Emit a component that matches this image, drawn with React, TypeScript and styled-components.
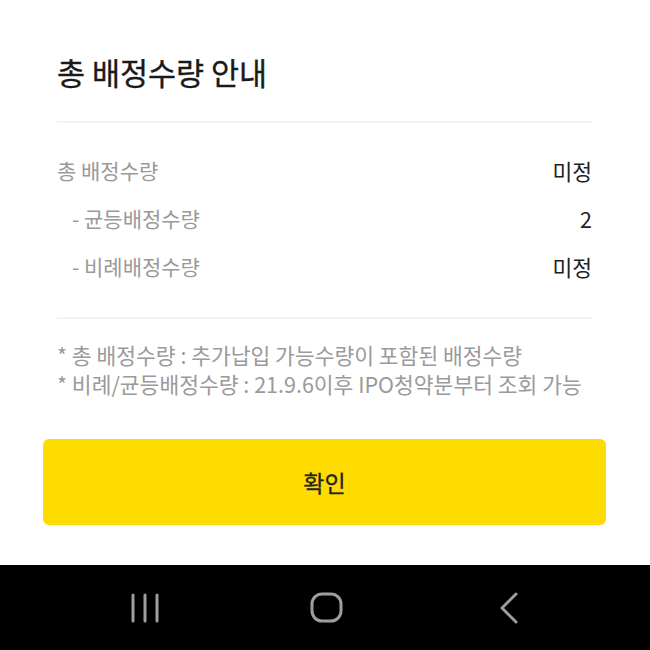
import React from "react";
import styled, { createGlobalStyle } from "styled-components";

const Global = createGlobalStyle`
  html, body { margin: 0; padding: 0; background: #fff; }
  body { font-family: "Noto Sans CJK KR", "Noto Sans", sans-serif; }
  #root { height: 650px; }
`;

const Screen = styled.div`
  width: 650px;
  height: 650px;
  display: flex;
  flex-direction: column;
  background: #fff;
  overflow: hidden;
`;

const Sheet = styled.div`
  flex: 1;
  display: flex;
  flex-direction: column;
  padding: 0 44px 0 43px;
`;

const Inner = styled.div`
  padding: 0 14px;
  display: flex;
  flex-direction: column;
`;

const Title = styled.h1`
  margin: 0;
  padding: 52px 0 29px;
  font-size: 30.5px;
  line-height: 40px;
  font-weight: 400;
  color: #1a1a1a;
  -webkit-text-stroke: 0.35px #1a1a1a;
`;

const Divider = styled.div`
  height: 2px;
  background: #f3f3f3;
`;

const Rows = styled.div`
  display: flex;
  flex-direction: column;
  padding: 33px 0 37px;
  gap: 20px;
`;

const Row = styled.div`
  display: flex;
  justify-content: space-between;
  align-items: center;
  height: 28px;
`;

const Label = styled.span<{ $sub?: boolean }>`
  font-size: 21px;
  color: #9a9a9a;
  padding-left: ${(p) => (p.$sub ? "15px" : "0")};
`;

const Value = styled.span`
  font-size: 21.5px;
  color: #222;
`;

const Notes = styled.div`
  padding-top: 21px;
  display: flex;
  flex-direction: column;
`;

const Note = styled.p`
  margin: 0;
  font-size: 21.5px;
  line-height: 29px;
  color: #9a9a9a;
  white-space: nowrap;
`;

const Button = styled.button`
  margin-top: 41px;
  height: 86px;
  width: 100%;
  border: none;
  border-radius: 6px;
  background: #fedc00;
  color: #222;
  font-family: inherit;
  font-size: 23px;
  font-weight: 400;
  -webkit-text-stroke: 0.3px #222;
  cursor: pointer;
`;

const NavBar = styled.nav`
  height: 85px;
  margin-top: auto;
  background: #000;
  display: grid;
  grid-template-columns: repeat(3, 1fr);
  align-items: center;
  padding: 0 50px 0 54px;
`;

const NavSlot = styled.div`
  display: flex;
  justify-content: center;
`;

export default function App() {
  return (
    <Screen>
      <Global />
      <Sheet>
        <Inner>
          <Title>총 배정수량 안내</Title>
          <Divider />
          <Rows>
            <Row>
              <Label>총 배정수량</Label>
              <Value>미정</Value>
            </Row>
            <Row>
              <Label $sub>- 균등배정수량</Label>
              <Value>2</Value>
            </Row>
            <Row>
              <Label $sub>- 비례배정수량</Label>
              <Value>미정</Value>
            </Row>
          </Rows>
          <Divider />
          <Notes>
            <Note>* 총 배정수량 : 추가납입 가능수량이 포함된 배정수량</Note>
            <Note>* 비례/균등배정수량 : 21.9.6이후 IPO청약분부터 조회 가능</Note>
          </Notes>
        </Inner>
        <Button>확인</Button>
      </Sheet>
      <NavBar>
        <NavSlot>
          <svg width="30" height="30" viewBox="0 0 30 30">
            <g stroke="#9e9e9e" strokeWidth="3" strokeLinecap="round">
              <line x1="3" y1="2" x2="3" y2="28" />
              <line x1="15" y1="2" x2="15" y2="28" />
              <line x1="27" y1="2" x2="27" y2="28" />
            </g>
          </svg>
        </NavSlot>
        <NavSlot>
          <svg width="34" height="32" viewBox="0 0 34 32">
            <rect x="2" y="2" width="29" height="27" rx="10" fill="none" stroke="#9e9e9e" strokeWidth="3" />
          </svg>
        </NavSlot>
        <NavSlot>
          <svg width="20" height="32" viewBox="0 0 20 32">
            <polyline points="17,2 3,16 17,30" fill="none" stroke="#9e9e9e" strokeWidth="3" strokeLinecap="round" strokeLinejoin="round" />
          </svg>
        </NavSlot>
      </NavBar>
    </Screen>
  );
}
